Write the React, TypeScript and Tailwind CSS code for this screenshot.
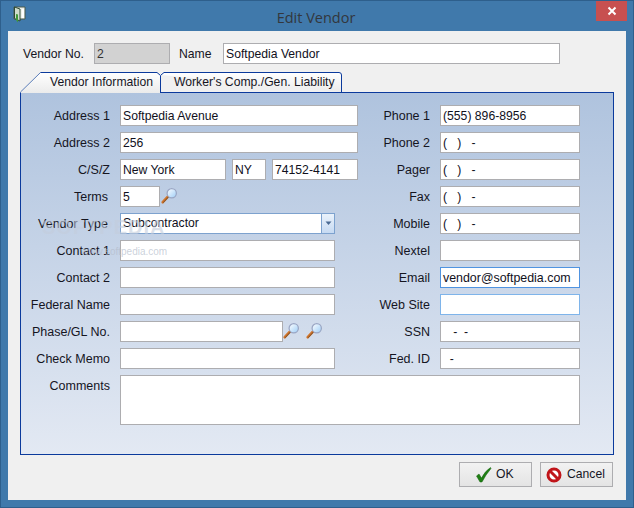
const sans = "font-['Liberation_Sans',Arial,sans-serif]";

function Magnifier() {
  return (
    <svg width="17" height="17" viewBox="0 0 19 19" className="shrink-0 mt-[-2px]">
      <defs>
        <linearGradient id="lens" x1="0" y1="0" x2="1" y2="1">
          <stop offset="0" stopColor="#ffffff" />
          <stop offset="1" stopColor="#9ccdf7" />
        </linearGradient>
      </defs>
      <path d="M2 17 L8 10.5" stroke="#d2752a" strokeWidth="3" strokeLinecap="round" />
      <path d="M2.6 17.3 L8 11.5" stroke="#6b4a2c" strokeWidth="1" strokeLinecap="round" />
      <circle cx="12" cy="7" r="5.2" fill="url(#lens)" stroke="#9aa6c4" strokeWidth="1.4" />
    </svg>
  );
}

function Field({ w, value, className = "" }: { w: string; value?: string; className?: string }) {
  return (
    <div className={`${w} h-[21px] shrink-0 bg-white border border-[#adadb0] pl-[2px] leading-[20px] whitespace-pre text-[#10101c] ${className}`}>
      {value}
    </div>
  );
}

function Row({ label, width, children }: { label: string; width: string; children: React.ReactNode }) {
  return (
    <div className="flex h-[21px] items-center gap-[10px]">
      <div className={`${width} shrink-0 text-right whitespace-nowrap text-[12.5px] text-[#15151f] pt-[2px]`}>{label}</div>
      {children}
    </div>
  );
}

const left = "w-[89px]";
const right = "w-[72px]";

export default function App() {
  return (
    <div className={`${sans} w-[634px] h-[508px] flex flex-col bg-[#4079ab] border border-[#2e5f8c] text-[12.2px] overflow-hidden`}>
      <div className="h-[30px] flex items-center justify-between shrink-0 relative">
        <svg width="13" height="17" viewBox="0 0 13 17" className="ml-[12px] mt-[-3px]">
          <path d="M1 1 H12 V13 H1 Z" fill="#eef1ea" stroke="#4b5a4c" />
          <path d="M1.5 1 L7 3 V15 L1.5 12.5 Z" fill="#cfdccb" stroke="#2f4a32" />
          <path d="M3 8 L5 8.6 V16.5 L3 14 Z" fill="#3f9a3a" />
          <rect x="9" y="3" width="2" height="9" fill="#ffffff" />
        </svg>
        <div className="absolute left-0 right-0 top-[6px] text-center text-[14.5px] text-[#33373d] font-['Open_Sans',sans-serif] pr-[2px]">Edit Vendor</div>
        <div className="w-[31px] h-[20px] bg-[#c75050] mr-[6px] mt-[-10px] flex items-center justify-center">
          <svg width="10" height="10" viewBox="0 0 10 10">
            <path d="M1.5 1.5 L8.5 8.5 M8.5 1.5 L1.5 8.5" stroke="#fff" strokeWidth="2" />
          </svg>
        </div>
      </div>

      <div className="mx-[7px] h-[469px] bg-[#f0f0f0] px-[12px] shrink-0 flex flex-col">
        <div className="flex items-center h-[21px] mt-[12px] shrink-0">
          <div className="w-[74px] pl-[3px] pt-[2px] text-[#15151f]">Vendor No.</div>
          <div className="w-[76px] h-[21px] bg-[#d2d2d2] border border-[#adadb0] pl-[2px] leading-[20px] text-[#333]">2</div>
          <div className="ml-[9px] w-[44px] pt-[2px] text-[#15151f]">Name</div>
          <Field w="w-[337px]" value="Softpedia Vendor" />
        </div>

        <div className="flex h-[21px] mt-[8px] shrink-0 relative z-10">
          <div className="relative w-[141px] h-[21px] shrink-0">
            <svg width="141" height="21" viewBox="0 0 141 21" className="absolute inset-0">
              <defs>
                <linearGradient id="tab" x1="0" y1="0" x2="0" y2="1">
                  <stop offset="0" stopColor="#ffffff" />
                  <stop offset="1" stopColor="#ebebeb" />
                </linearGradient>
              </defs>
              <path d="M0.5 21 V20 L20.5 0.5 H137 L140.5 3.5 V21 Z" fill="url(#tab)" />
              <path d="M0.5 21 V20 L20.5 0.5" fill="none" stroke="#5b7db8" />
              <path d="M20.5 0.5 H137 L140.5 3.5 V21" fill="none" stroke="#0b3a9c" />
            </svg>
            <div className="relative pl-[30px] leading-[20px] text-[#15151f]">Vendor Information</div>
          </div>
          <div className="relative w-[182px] h-[20px] shrink-0">
            <svg width="182" height="20" viewBox="0 0 182 20" className="absolute inset-0">
              <path d="M0 3 L3 0.5 H178 Q180.5 0.5 180.5 3 V20" fill="url(#tab)" stroke="#0b3a9c" />
            </svg>
            <div className="relative pl-[13px] leading-[20px] text-[#15151f]">Worker's Comp./Gen. Liability</div>
          </div>
        </div>

        <div className="h-[363px] mt-[-1px] border border-[#0b3a9c] bg-gradient-to-b from-[#afc3de] to-[#e3e9f3] pt-[12px] flex flex-col gap-[6px] shrink-0 relative">
          <div className="flex">
            <div className="w-[337px] shrink-0 flex flex-col gap-[6px]">
              <Row label="Address 1" width={left}><Field w="w-[238px]" value="Softpedia Avenue" /></Row>
              <Row label="Address 2" width={left}><Field w="w-[238px]" value="256" /></Row>
              <Row label="C/S/Z" width={left}>
                <div className="flex gap-[6px]">
                  <Field w="w-[106px]" value="New York" />
                  <Field w="w-[34px]" value="NY" />
                  <Field w="w-[86px]" value="74152-4141" />
                </div>
              </Row>
              <Row label="Terms" width={`${left} pr-[2px]`}>
                <div className="flex items-center gap-[1px]">
                  <Field w="w-[40px]" value="5" />
                  <Magnifier />
                </div>
              </Row>
              <Row label="Vendor Type" width={`${left} pr-[2px]`}>
                <div className="w-[215px] h-[21px] flex bg-white border border-[#7da2ce]">
                  <div className="flex-1 pl-[2px] leading-[19px] text-[#10101c]">Subcontractor</div>
                  <div className="w-[13px] bg-gradient-to-b from-[#eaf2fb] to-[#c6daf2] border-l border-[#7da2ce] flex items-center justify-center">
                    <svg width="7" height="5" viewBox="0 0 7 5"><path d="M0.5 0.5 H6.5 L3.5 4 Z" fill="#4a6a94" /></svg>
                  </div>
                </div>
              </Row>
              <Row label="Contact 1" width={left}><Field w="w-[215px]" /></Row>
              <Row label="Contact 2" width={left}><Field w="w-[215px]" /></Row>
              <Row label="Federal Name" width={left}><Field w="w-[215px]" /></Row>
              <Row label="Phase/GL No." width={left}>
                <div className="flex items-center">
                  <Field w="w-[163px]" />
                  <div className="flex gap-[6px]"><Magnifier /><Magnifier /></div>
                </div>
              </Row>
              <Row label="Check Memo" width={left}><Field w="w-[215px]" /></Row>
            </div>
            <div className="flex-1 flex flex-col gap-[6px]">
              <Row label="Phone 1" width={right}><Field w="w-[140px]" value="(555) 896-8956" /></Row>
              <Row label="Phone 2" width={right}><Field w="w-[140px]" value="(   )   -" /></Row>
              <Row label="Pager" width={right}><Field w="w-[140px]" value="(   )   -" /></Row>
              <Row label="Fax" width={right}><Field w="w-[140px]" value="(   )   -" /></Row>
              <Row label="Mobile" width={right}><Field w="w-[140px]" value="(   )   -" /></Row>
              <Row label="Nextel" width={right}><Field w="w-[140px]" /></Row>
              <Row label="Email" width={right}><Field w="w-[140px]" value="vendor@softpedia.com" className="!border-[#4f93e0] text-[12.4px]" /></Row>
              <Row label="Web Site" width={right}><Field w="w-[140px]" className="!border-[#7eb4ea]" /></Row>
              <Row label="SSN" width={right}><Field w="w-[140px]" value="   -  -" /></Row>
              <Row label="Fed. ID" width={right}><Field w="w-[140px]" value="  -" /></Row>
            </div>
          </div>
          <div className="flex items-start gap-[10px] h-[50px]">
            <div className={`${left} shrink-0 text-right text-[12.5px] text-[#15151f] pt-[2px]`}>Comments</div>
            <Field w="w-[460px] !h-[50px]" />
          </div>
          <div className="absolute left-[21px] top-[122px] text-[20px] leading-[24px] font-bold tracking-[1px] text-[#c3cddd]/60 pointer-events-none">SOFTPEDIA</div>
          <div className="absolute left-[60px] top-[151px] text-[10px] text-[#b4bccb]/70 pointer-events-none">www.softpedia.com</div>
        </div>

        <div className="flex justify-end gap-[8px] mt-[7px] pr-[1px]">
          <div className="w-[73px] h-[25px] border border-[#adadb0] bg-gradient-to-b from-[#f2f2f2] to-[#e4e4e4] flex items-center pl-[15px] gap-[4px] text-[#15151f]">
            <svg width="17" height="17" viewBox="0 0 17 17"><path d="M1.5 10 L4 8 L6.5 12 Q10 5 15.5 1.5 L16 2.5 Q10.5 9 7 16 H5 Z" fill="#1f7f14" stroke="#166210" strokeWidth="0.5" /></svg>
            <span>OK</span>
          </div>
          <div className="w-[73px] h-[25px] border border-[#adadb0] bg-gradient-to-b from-[#f2f2f2] to-[#e4e4e4] flex items-center pl-[5px] gap-[5px] text-[#15151f]">
            <svg width="16" height="16" viewBox="0 0 16 16">
              <circle cx="8" cy="8" r="6" fill="#fff" stroke="#c0151a" strokeWidth="3" />
              <path d="M3.8 3.8 L12.2 12.2" stroke="#c0151a" strokeWidth="3" />
            </svg>
            <span>Cancel</span>
          </div>
        </div>
      </div>
    </div>
  );
}
